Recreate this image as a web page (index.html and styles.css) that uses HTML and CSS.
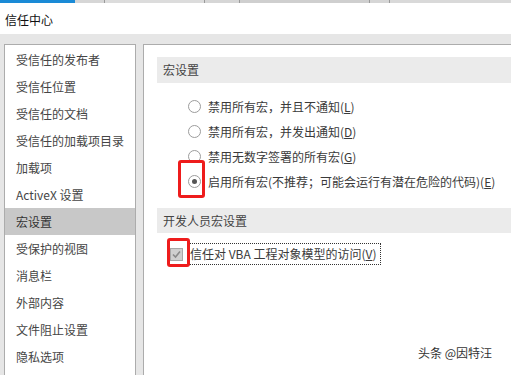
FILE: index.html
```html
<!DOCTYPE html>
<html lang="zh-CN">
<head>
<meta charset="utf-8">
<title>信任中心</title>
<link rel="stylesheet" href="styles.css">
</head>
<body>
<div class="page">
  <div class="topstrip">
    <div class="ts-blue"></div>
    <div class="ts-seg ts-a"></div>
    <div class="ts-seg ts-b"></div>
    <div class="ts-seg ts-c"></div>
    <div class="ts-seg ts-d"></div>
    <div class="ts-seg ts-e"></div>
  </div>
  <div class="titlebar">信任中心</div>
  <div class="main">
    <ul class="nav">
      <li>受信任的发布者</li>
      <li>受信任位置</li>
      <li>受信任的文档</li>
      <li>受信任的加载项目录</li>
      <li>加载项</li>
      <li>ActiveX 设置</li>
      <li class="selected">宏设置</li>
      <li>受保护的视图</li>
      <li>消息栏</li>
      <li>外部内容</li>
      <li>文件阻止设置</li>
      <li>隐私选项</li>
    </ul>
    <div class="content">
      <div class="band">宏设置</div>
      <div class="options">
        <div class="opt"><span class="radio"></span><span>禁用所有宏，并且不通知(<u>L</u>)</span></div>
        <div class="opt"><span class="radio"></span><span>禁用所有宏，并发出通知(<u>D</u>)</span></div>
        <div class="opt"><span class="radio"></span><span>禁用无数字签署的所有宏(<u>G</u>)</span></div>
        <div class="opt"><span class="radio checked"></span><span>启用所有宏(不推荐；可能会运行有潜在危险的代码)(<u>E</u>)</span></div>
      </div>
      <div class="band band2">开发人员宏设置</div>
      <div class="checkrow">
        <span class="checkbox"><svg width="11" height="11" viewBox="0 0 11 11"><path d="M2 5.5 L4.5 8 L9 2.5" fill="none" stroke="#8a8a8a" stroke-width="1.6"/></svg></span>
        <span class="checklabel">信任对 VBA 工程对象模型的访问(<u>V</u>)</span>
      </div>
    </div>
  </div>
  <div class="mark mark1"></div>
  <div class="mark mark2"></div>
  <div class="watermark">头条 @因特汪</div>
</div>
</body>
</html>
```

FILE: styles.css
```css
* { box-sizing: border-box; }
html, body { margin: 0; padding: 0; }
body {
  width: 511px;
  height: 375px;
  overflow: hidden;
  background: #e6e6e6;
  font-family: "Noto Sans CJK SC", "Noto Sans", sans-serif;
  font-size: 12px;
  color: #444;
}
.page {
  position: relative;
  width: 511px;
  height: 375px;
  overflow: hidden;
}
.topstrip {
  display: flex;
  height: 3px;
  background: #d9d9d9;
}
.ts-blue { width: 75px; background: #1a8ad6; }
.ts-seg { border-right: 1px solid #9a9a9a; background: #d6d6d6; }
.ts-a { width: 30px; }
.ts-b { width: 100px; background: #dcdcdc; }
.ts-c { width: 35px; }
.ts-d { width: 130px; background: #cfcfcf; }
.ts-e { width: 20px; }
.titlebar {
  height: 31px;
  background: #fff;
  padding: 3px 0 0 5px;
  line-height: 27px;
  font-size: 12px;
  color: #111;
}
.main {
  display: flex;
  gap: 7px;
  padding: 10px 0 0 4px;
  height: 341px;
}
.nav {
  list-style: none;
  margin: 0;
  padding: 1px 0 0 0;
  width: 132px;
  flex: none;
  background: #fff;
  border: 1px solid #acacac;
  border-bottom: none;
}
.nav li {
  height: 27px;
  line-height: 27px;
  padding-left: 11px;
  white-space: nowrap;
  color: #454545;
}
.nav li.selected { background: #c8c8c8; color: #333; }
.content {
  flex: none;
  width: 420px;
  background: #fff;
  border: 1px solid #acacac;
  border-bottom: none;
  padding: 12px 0 0 13px;
}
.band {
  height: 26px;
  line-height: 26px;
  background: #ebebeb;
  padding-left: 6px;
  color: #444;
}
.band2 { margin-top: 14px; height: 25px; line-height: 25px; }
.options { margin-top: 11px; }
.opt {
  display: flex;
  align-items: center;
  height: 25px;
  padding-left: 31px;
  gap: 7px;
  white-space: nowrap;
  color: #3a3a3a;
}
.radio {
  width: 13px;
  height: 13px;
  flex: none;
  border: 1px solid #9c9c9c;
  border-radius: 50%;
  background: #fff;
  display: flex;
  align-items: center;
  justify-content: center;
}
.radio.checked::after {
  content: "";
  width: 5px;
  height: 5px;
  border-radius: 50%;
  background: #555;
}
.checkrow {
  display: flex;
  align-items: center;
  margin-top: 10px;
  height: 22px;
  padding-left: 13px;
  gap: 6px;
}
.checkbox {
  width: 13px;
  height: 13px;
  flex: none;
  border: 1px solid #a8a8a8;
  background: #cfcfcf;
  display: flex;
  align-items: center;
  justify-content: center;
}
.checklabel {
  height: 22px;
  line-height: 20px;
  padding: 0 4px 0 0;
  border: 1px dotted #333;
  white-space: nowrap;
  color: #3a3a3a;
}
.mark {
  position: absolute;
  border: 3px solid #ee1c1c;
  border-radius: 3px;
}
.mark1 { left: 178px; top: 160px; width: 27px; height: 38px; }
.mark2 { left: 167px; top: 238px; width: 23px; height: 29px; }
.watermark {
  position: absolute;
  left: 418px;
  top: 344px;
  font-size: 12px;
  line-height: 18px;
  color: #333;
  text-shadow: 0 0 2px #fff, 0 0 2px #fff;
  white-space: nowrap;
}
```
